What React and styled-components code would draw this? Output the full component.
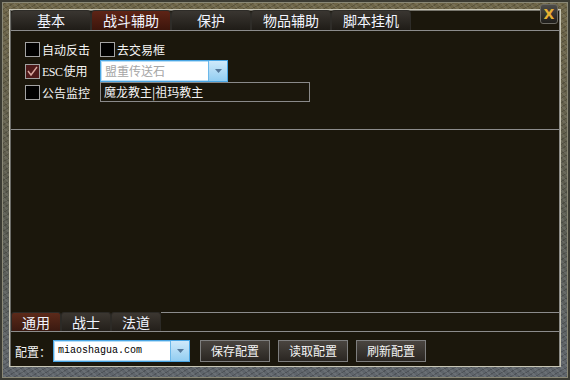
import React from "react";
import styled, { createGlobalStyle } from "styled-components";

const Global = createGlobalStyle`
  html, body { margin: 0; padding: 0; background: #2a2a24; }
  * { box-sizing: border-box; }
`;

const topTabs = ["基本", "战斗辅助", "保护", "物品辅助", "脚本挂机"];
const subTabs = ["通用", "战士", "法道"];

function CheckBox({ checked }) {
  return (
    <Box $checked={checked}>
      {checked && (
        <svg width="13" height="13" viewBox="0 0 13 13">
          <polyline
            points="2,6 5,10 11,2"
            fill="none"
            stroke="#d9a8a0"
            strokeWidth="1.4"
          />
        </svg>
      )}
    </Box>
  );
}

function Arrow() {
  return (
    <svg width="7" height="4" viewBox="0 0 7 4">
      <polygon points="0,0 7,0 3.5,4" fill="#55789a" />
    </svg>
  );
}

function Combo({ value, width, $mono, $placeholder }) {
  return (
    <ComboBox style={{ width }}>
      <ComboText $mono={$mono} $placeholder={$placeholder}>
        {value}
      </ComboText>
      <ComboBtn>
        <Arrow />
      </ComboBtn>
    </ComboBox>
  );
}

function App() {
  return (
    <>
      <Global />
      <Window>
        <CloseBtn>X</CloseBtn>
        <Panel>
          <TabBar>
            {topTabs.map((t) => (
              <Tab key={t} $active={t === "战斗辅助"}>
                {t}
              </Tab>
            ))}
          </TabBar>
          <Options>
            <Row $h={18}>
              <Check>
                <CheckBox />
                <Label>自动反击</Label>
              </Check>
              <Check>
                <CheckBox />
                <Label>去交易框</Label>
              </Check>
            </Row>
            <Row $h={22} $mt={2}>
              <Check>
                <CheckBox checked />
                <Label>
                  <Esc>ESC</Esc>使用
                </Label>
              </Check>
              <Combo value="盟重传送石" width={128} $placeholder />
            </Row>
            <Row $h={20}>
              <Check>
                <CheckBox />
                <Label>公告监控</Label>
              </Check>
              <TextInput>魔龙教主|祖玛教主</TextInput>
            </Row>
          </Options>
          <Empty />
          <SubTabBar>
            {subTabs.map((t) => (
              <SubTab key={t} $active={t === "通用"}>
                {t}
              </SubTab>
            ))}
            <SubTabRest />
          </SubTabBar>
          <BottomBar>
            <ConfLabel>配置：</ConfLabel>
            <Combo value="miaoshagua.com" width={137} $mono />
            <Buttons>
              <Button>保存配置</Button>
              <Button>读取配置</Button>
              <Button>刷新配置</Button>
            </Buttons>
          </BottomBar>
        </Panel>
      </Window>
    </>
  );
}

const Window = styled.div`
  position: relative;
  width: 570px;
  height: 380px;
  padding: 10px 10px 14px 10px;
  background-color: #5d5b49;
  background-image: repeating-linear-gradient(
      45deg,
      rgba(255, 255, 255, 0.07) 0 2px,
      transparent 2px 5px
    ),
    repeating-linear-gradient(
      -30deg,
      rgba(0, 0, 0, 0.18) 0 1px,
      transparent 1px 4px
    ),
    linear-gradient(#6e6547, #5a5c52 60%, #5f656c);
  box-shadow: inset 0 0 0 2px #3a3a32, inset 0 0 0 3px #8a8876;
  font-family: "Noto Sans CJK SC", "Noto Sans", sans-serif;
`;

const CloseBtn = styled.div`
  position: absolute;
  top: 4px;
  right: 12px;
  width: 18px;
  height: 20px;
  border: 1px solid #6c6a62;
  border-radius: 3px;
  background: linear-gradient(#4e4c48, #1e1d1a);
  color: #e6b033;
  font-family: "DejaVu Sans", sans-serif;
  font-weight: bold;
  font-size: 14px;
  line-height: 18px;
  text-align: center;
`;

const Panel = styled.div`
  height: 100%;
  display: flex;
  flex-direction: column;
  background: #1b170c;
  border-left: 1px solid #6a6a66;
  border-right: 1px solid #8a8a86;
  box-shadow: 0 0 0 1px #c8c6b4;
`;

const TabBar = styled.div`
  display: flex;
  height: 21px;
  border-bottom: 1px solid #8c8c8c;
  background: linear-gradient(#77756c 0 1px, transparent 1px);
`;

const Tab = styled.div`
  width: 80px;
  height: 20px;
  border: 1px solid #2e2c28;
  border-bottom: none;
  border-radius: 4px 4px 0 0;
  background: ${(p) =>
    p.$active
      ? "linear-gradient(#5e2416, #3c150b)"
      : "linear-gradient(#3a3631, #1f1c17)"};
  color: #f2f5ff;
  font-size: 14px;
  line-height: 19px;
  text-align: center;
`;

const Options = styled.div`
  height: 99px;
  padding: 9px 0 0 14px;
  border-bottom: 1px solid #8c8c8c;
`;

const Row = styled.div`
  display: grid;
  grid-template-columns: 75px auto;
  align-items: center;
  height: ${(p) => p.$h}px;
  margin-top: ${(p) => p.$mt || 0}px;
`;

const Check = styled.div`
  display: flex;
  align-items: center;
  gap: 2px;
`;

const Box = styled.span`
  display: flex;
  align-items: center;
  justify-content: center;
  width: 15px;
  height: 15px;
  border: 1px solid #a2a2a2;
  background: ${(p) => (p.$checked ? "#4e1a1a" : "#000")};
`;

const Label = styled.span`
  color: #f4f4f4;
  font-size: 12px;
  white-space: nowrap;
`;

const ConfLabel = styled(Label)`
  width: 38px;
`;

const Esc = styled.span`
  font-family: "Liberation Serif", serif;
  font-size: 12px;
  letter-spacing: -0.5px;
  margin-right: 1px;
`;

const ComboBox = styled.div`
  display: flex;
  height: 22px;
  border: 1px solid #4aa6e4;
  box-shadow: inset 0 0 0 1px #b8def6;
  background: #fff;
`;

const ComboText = styled.div`
  flex: 1;
  padding-left: 4px;
  font-family: ${(p) =>
    p.$mono
      ? '"Liberation Mono", monospace'
      : '"Noto Sans CJK SC", sans-serif'};
  font-size: ${(p) => (p.$mono ? 10 : 12)}px;
  line-height: 20px;
  color: ${(p) => (p.$placeholder ? "#a6a6a6" : "#000")};
`;

const ComboBtn = styled.div`
  width: 19px;
  display: flex;
  align-items: center;
  justify-content: center;
  border-left: 1px solid #6cb8ea;
  background: linear-gradient(#cfe9fa, #92cdf1);
`;

const TextInput = styled.div`
  width: 210px;
  height: 20px;
  border: 1px solid #8a8a8a;
  padding-left: 3px;
  color: #f4f4f4;
  font-size: 12px;
  line-height: 18px;
`;

const Empty = styled.div`
  flex: 1;
`;

const SubTabBar = styled.div`
  display: flex;
  height: 20px;
  border-bottom: 1px solid #8c8c8c;
`;

const SubTab = styled.div`
  width: 50px;
  height: 19px;
  border-radius: 3px 3px 0 0;
  border: 1px solid #2c2a26;
  border-bottom: none;
  background: ${(p) =>
    p.$active
      ? "linear-gradient(#5c2a1a, #3a1910)"
      : "linear-gradient(#3c3731, #231f1a)"};
  color: #f2f5ff;
  font-size: 14px;
  line-height: 18px;
  text-align: center;
`;

const SubTabRest = styled.div`
  flex: 1;
  border-top: 1px solid #8c8c8c;
`;

const BottomBar = styled.div`
  height: 34px;
  display: flex;
  align-items: center;
  padding: 4px 0 0 4px;
`;

const Buttons = styled.div`
  display: flex;
  gap: 8px;
  margin-left: 10px;
`;

const Button = styled.div`
  width: 70px;
  height: 22px;
  border: 1px solid #7e7e7e;
  background: linear-gradient(#4a4540, #2a2622);
  color: #f4f4f4;
  font-size: 12px;
  line-height: 20px;
  text-align: center;
`;

export default App;
